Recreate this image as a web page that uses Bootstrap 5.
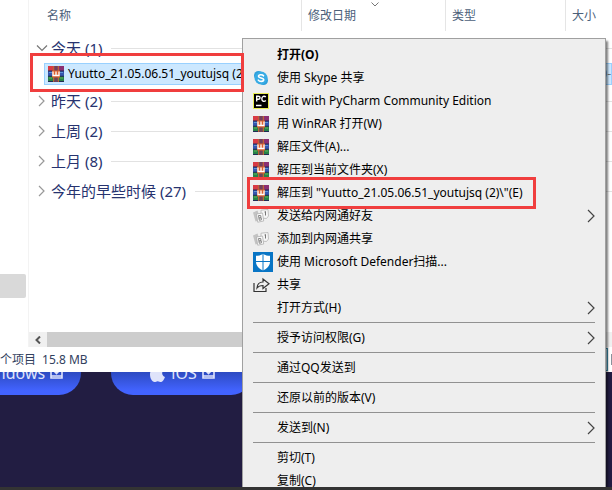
<!DOCTYPE html>
<html lang="zh-CN">
<head>
<meta charset="utf-8">
<meta name="viewport" content="width=device-width, initial-scale=1">
<title>文件资源管理器</title>
<link href="https://cdn.jsdelivr.net/npm/bootstrap@5.3.0/dist/css/bootstrap.min.css" rel="stylesheet">
<style>
body{font-family:"Noto Sans","Noto Sans CJK SC",sans-serif;font-size:12px;line-height:16px;background:#221d42;color:#000}
button{font:inherit;color:inherit;background:none;border:0;padding:0;text-align:left}
svg{display:block;flex:none}
.site{padding-top:351px;gap:30px;margin-left:-61px}
.download{width:142px;height:44px;border-radius:22px;background:linear-gradient(#2b49bd 45%,#4263ff 90%);color:#dfe3fa;font-size:16px;line-height:20px;text-decoration:none;gap:5px}
.download:hover{color:#fff}
.explorer{background:#fff}
.tree{width:29px;border-right:1px solid #f3f3f3;padding-top:274px}
.tree-node{display:block;width:26px;height:24px;background:#d9d9d9;border-radius:0 2px 2px 0}
.heads{height:31px;color:#4c607a}
.heads button{padding:0 0 0 6px;border-left:1px solid #e5e5e5}
.heads .h-name{padding-left:18px;border-left:0}
.h-date{width:144px}.h-type{width:120px}.h-size{width:47px}
.sort{top:2px;left:69px}
.listing{min-height:301px;padding:2px 0 0 7px}
.group{height:30px;width:100%;gap:3px;font-size:15px;line-height:20px;color:#27336f}
.group::after{content:"";flex:1;height:1px;background:#e2e2e2;margin-left:6px}
.file{height:22px;margin-left:8px;padding-left:3px;background:#cce8ff;border:1px solid #99d1ff;gap:4px}
.file-wrap{margin-bottom:1px}
.hscroll{height:15px;background:#f0f0f0}
.hscroll button{width:18px}
.thumb{background:#cdcdcd;margin-right:20px}
.status{height:25px;color:#32415e;gap:6px}
.view{width:20px;height:23px;background:#cde8f5;border:1px solid #3c8fae;margin-right:4px}
.view-thumb{width:1px;height:11px;background:#8a929c}
.status .view{margin-right:-3px}
.ctx{left:242px;right:6px;top:38px;bottom:3px;background:#eee;border:1px solid #a0a0a0;border-bottom:0;padding:4px 10px 0;box-shadow:2px 3px 2px rgba(0,0,0,.5)}
.ctx button{height:23px;gap:4px;flex:none}
.slot{width:20px;flex:none}
.rule{flex:none;height:1px;background:#919191;margin:3px 0}
.marker{border:3px solid #f03e3e;z-index:5;pointer-events:none}
.m-file{left:-6px;top:-10px;width:214px;height:39px}
.m-item{left:-6px;top:-4px;width:289px;height:32px}
.taskbar{height:3px;background:#333;z-index:3}
</style>
<script src="https://cdn.jsdelivr.net/npm/bootstrap@5.3.0/dist/js/bootstrap.bundle.min.js"></script>
</head>
<body class="vh-100 overflow-hidden position-relative">
<svg width="0" height="0" class="position-absolute" aria-hidden="true">
<defs>
<symbol id="rar" viewBox="0 0 16 16"><path fill="#8b2f72" d="M0 0h16v5H0z"/><path fill="#d83b45" d="M0 0h5v5H0z"/><path fill="#3556ae" d="M0 5h16v5H0z"/><path fill="#278247" d="M0 10h16v6H0z"/><path fill="#222b56" d="M0 4.500h16v1H0zM0 9.800h16v1H0zM0 15h16v1H0z"/><path fill="#5e94d5" d="M1 6h3v1H1zm11 0h3v1h-3z"/><path fill="#62b85b" d="M1 11.500h3v1H1zm11 0h3v1h-3z"/><path fill="#ba6536" d="M5 0h1.500v16H5zm4.500 0H11v16H9.500z"/><path fill="#70405c" d="M6.500 0h3v16h-3z"/><path fill="#d9602f" d="M4 4.500h8v7H4z"/><path fill="none" stroke="#fff" stroke-width="1.300" d="M5 5.500v4h6v-4M8 5.500V9.500"/></symbol>
<symbol id="right" viewBox="0 0 8 14"><path fill="none" stroke="#444" stroke-width="1.200" d="m1 1 6 6-6 6"/></symbol>
<symbol id="note" viewBox="0 0 16 14"><path fill="#c3c3c3" d="M0 3.500 4.500 1.500l3 9.500-5 1.500z"/><path fill="#f6f6f6" stroke="#b5b5b5" stroke-width=".8" d="m8 1.200 7-.7.5 6.500-2 2.500L8 9z"/><path fill="none" stroke="#777" d="m11.500 3 1-.5v4"/><path fill="#fafafa" stroke="#b0b0b0" stroke-width=".8" d="m3.500 5 6-1 1.200 8-6 1.200z"/><path fill="none" stroke="#888" d="m5.500 6.500.8 4.800 2.200-.5-.3-2-2 .2 1.800-.5-.3-2z"/></symbol>
<symbol id="down" viewBox="0 0 13 12"><path fill="none" stroke="currentColor" stroke-width="1.600" d="M1 1v10h11V1M6.500 0v6M4 4l2.500 2.500L9 4M1 9h11"/></symbol>
</defs>
</svg>

<main class="site d-flex">
<a href="#" class="download d-flex flex-shrink-0 align-items-center justify-content-center"><svg width="15" height="15"><path fill="currentColor" d="M0 2l7-1v6H0zm8-1 7-1v7H8zM0 8h7v6l-7-1zm8 0h7v7l-7-1z"/></svg>Windows <svg width="13" height="12"><use href="#down"/></svg></a>
<a href="#" class="download d-flex flex-shrink-0 align-items-center justify-content-center"><svg width="17" height="18" viewBox="0 0 17 18"><path fill="currentColor" d="M12 0c.2 2-1.500 4-3.500 4C8.300 2 10 .2 12 0zM15 6c-3 2-2 6 1 7-1 3-3 5-4 5s-2-.8-3.300-.8-2 .8-3.200.8C3 18 1 14 1 10.500 1 6.500 3.500 5 5.300 5c1.300 0 2.400.8 3.300.8C9.500 5.800 10.500 5 12 5c1 0 2.300.4 3 1z"/></svg>iOS <svg width="13" height="12"><use href="#down"/></svg></a>
</main>

<section class="explorer position-absolute top-0 start-0 end-0">
<div class="d-flex">
<nav class="tree flex-shrink-0" aria-label="导航"><button class="tree-node" aria-label="所选文件夹"></button></nav>
<div class="flex-grow-1">
<div class="heads d-flex">
<button class="h-name flex-grow-1">名称</button>
<button class="h-date position-relative">修改日期<svg class="sort position-absolute" width="8" height="5"><path fill="none" stroke="#777" d="m.5.500 3.500 3.500L7.500.500"/></svg></button>
<button class="h-type">类型</button>
<button class="h-size">大小</button>
</div>
<div class="listing">
<button class="group d-flex align-items-center"><svg width="12" height="12"><path fill="none" stroke="#777" stroke-width="1.200" d="m1 3.500 5 5 5-5"/></svg>今天 (1)</button>
<div class="file-wrap position-relative">
<div class="file d-flex align-items-center"><svg width="16" height="16"><use href="#rar"/></svg><button class="flex-grow-1">Yuutto_21.05.06.51_youtujsq (2).rar</button><span class="text-secondary">0-</span></div>
<div class="marker m-file position-absolute"></div>
</div>
<button class="group d-flex align-items-center"><svg width="12" height="12"><path fill="none" stroke="#999" stroke-width="1.200" d="m3 1 5 5-5 5"/></svg>昨天 (2)</button>
<button class="group d-flex align-items-center"><svg width="12" height="12"><path fill="none" stroke="#999" stroke-width="1.200" d="m3 1 5 5-5 5"/></svg>上周 (2)</button>
<button class="group d-flex align-items-center"><svg width="12" height="12"><path fill="none" stroke="#999" stroke-width="1.200" d="m3 1 5 5-5 5"/></svg>上月 (8)</button>
<button class="group d-flex align-items-center"><svg width="12" height="12"><path fill="none" stroke="#999" stroke-width="1.200" d="m3 1 5 5-5 5"/></svg>今年的早些时候 (27)</button>
</div>
<div class="hscroll d-flex">
<button class="d-flex align-items-center justify-content-center" aria-label="向左滚动"><svg width="6" height="8"><path fill="none" stroke="#555" stroke-width="2" d="M5 .500 1.500 4 5 7.500"/></svg></button>
<div class="thumb flex-grow-1"></div>
</div>
</div>
</div>
<footer class="status d-flex align-items-center"><span>个项目</span><span>15.8 MB</span><button class="view ms-auto" aria-label="详细信息视图"></button><span class="view-thumb"></span></footer>
</section>

<div class="ctx position-absolute">
<div class="h-100 d-flex flex-column overflow-visible" role="menu">
<button class="d-flex align-items-center fw-bold" role="menuitem"><span class="slot"></span>打开(O)</button>
<button class="d-flex align-items-center" role="menuitem"><span class="slot"><svg width="16" height="16"><circle cx="5.500" cy="5.500" r="4.500" fill="#2d9fda"/><circle cx="10.500" cy="10.500" r="4.500" fill="#2d9fda"/><circle cx="8" cy="8" r="6.500" fill="#38abe4"/><path fill="none" stroke="#fff" stroke-width="1.600" stroke-linecap="round" d="M10.500 5.800C9.500 4.300 5.500 4.300 5.500 6.300c0 2.200 5.200 1.200 5.200 3.500 0 2-4.200 2-5.400.3"/></svg></span>使用 Skype 共享</button>
<button class="d-flex align-items-center" role="menuitem"><span class="slot"><svg width="16" height="16"><path fill="#e9ed52" d="M0 0h16v16H0z"/><path d="M1 1h14v14H1z"/><path fill="none" stroke="#fff" stroke-width="1.400" d="M3.700 8.500V3.200h1.500c2.500 0 2.500 3 0 3H4M12.800 4c-1.500-1.500-4-.8-4 1.800s2.500 3.300 4 1.800M3 12.500h5.500"/></svg></span>Edit with PyCharm Community Edition</button>
<button class="d-flex align-items-center" role="menuitem"><span class="slot"><svg width="16" height="16"><use href="#rar"/></svg></span>用 WinRAR 打开(W)</button>
<button class="d-flex align-items-center" role="menuitem"><span class="slot"><svg width="16" height="16"><use href="#rar"/></svg></span>解压文件(A)...</button>
<button class="d-flex align-items-center" role="menuitem"><span class="slot"><svg width="16" height="16"><use href="#rar"/></svg></span>解压到当前文件夹(X)</button>
<button class="d-flex align-items-center position-relative" role="menuitem"><span class="slot"><svg width="16" height="16"><use href="#rar"/></svg></span>解压到 "Yuutto_21.05.06.51_youtujsq (2)\"(E)<span class="marker m-item position-absolute"></span></button>
<button class="d-flex align-items-center" role="menuitem"><span class="slot"><svg width="16" height="14"><use href="#note"/></svg></span>发送给内网通好友<svg class="ms-auto" width="8" height="14"><use href="#right"/></svg></button>
<button class="d-flex align-items-center" role="menuitem"><span class="slot"><svg width="16" height="14"><use href="#note"/></svg></span>添加到内网通共享</button>
<button class="d-flex align-items-center" role="menuitem"><span class="slot"><svg width="20" height="20"><path fill="#0875c5" d="M0 0h20v20H0z"/><path fill="#fff" d="M10 1.800c2 1.500 4.500 2 7 2v6c0 4-3 7-7 8.700-4-1.700-7-4.700-7-8.700v-6c2.500 0 5-.5 7-2z"/><path stroke="#0875c5" d="M10 1v18M2 9.500h16"/></svg></span>使用 Microsoft Defender扫描...</button>
<button class="d-flex align-items-center" role="menuitem"><span class="slot"><svg width="17" height="16"><path fill="none" stroke="#333" stroke-width="1.200" d="M1 6v8.500h12V11M4 11c.3-4 2.500-6 6-6V2l6 4.800-6 4.700v-3C7.500 8.500 5.500 9 4 11z"/></svg></span>共享</button>
<button class="d-flex align-items-center" role="menuitem"><span class="slot"></span>打开方式(H)<svg class="ms-auto" width="8" height="14"><use href="#right"/></svg></button>
<div class="rule"></div>
<button class="d-flex align-items-center" role="menuitem"><span class="slot"></span>授予访问权限(G)<svg class="ms-auto" width="8" height="14"><use href="#right"/></svg></button>
<div class="rule"></div>
<button class="d-flex align-items-center" role="menuitem"><span class="slot"></span>通过QQ发送到</button>
<div class="rule"></div>
<button class="d-flex align-items-center" role="menuitem"><span class="slot"></span>还原以前的版本(V)</button>
<div class="rule"></div>
<button class="d-flex align-items-center" role="menuitem"><span class="slot"></span>发送到(N)<svg class="ms-auto" width="8" height="14"><use href="#right"/></svg></button>
<div class="rule"></div>
<button class="d-flex align-items-center" role="menuitem"><span class="slot"></span>剪切(T)</button>
<button class="d-flex align-items-center" role="menuitem"><span class="slot"></span>复制(C)</button>
</div>
</div>
<div class="taskbar position-absolute bottom-0 start-0 end-0"></div>
</body>
</html>
